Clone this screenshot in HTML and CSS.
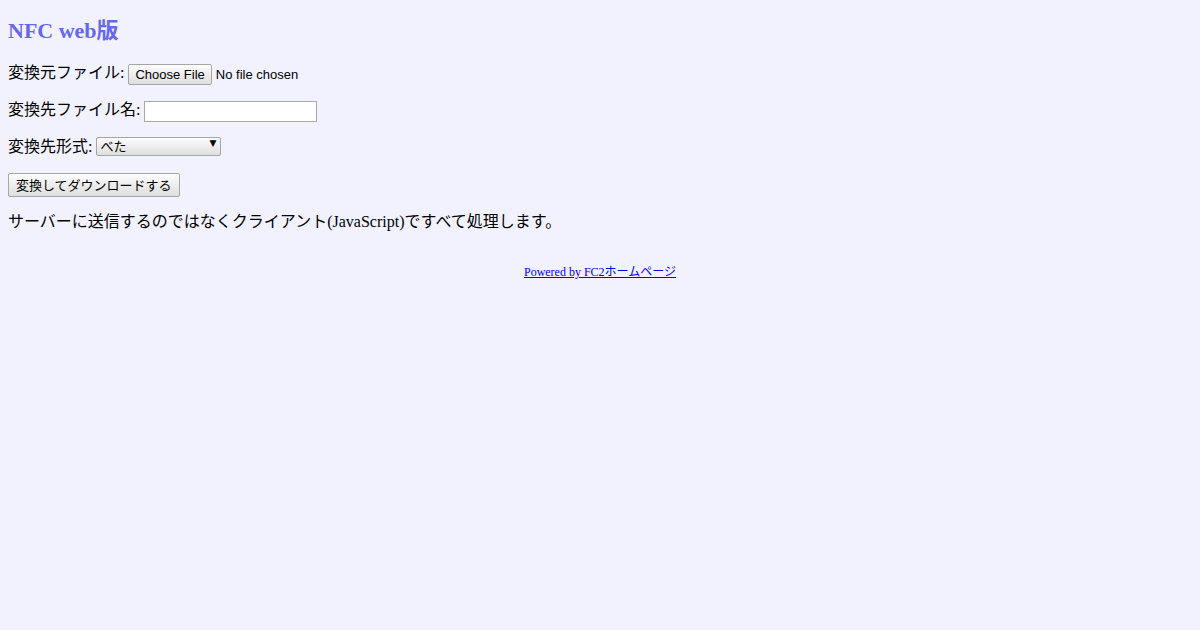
FILE: index.html
```html
<!DOCTYPE html>
<html lang="ja">
<head>
    <meta charset="UTF-8">
    <title>NFC web版</title>
    <link rel="stylesheet" href="styles.css">
</head>
<body>

    <h2 class="title">NFC web版</h2>

    <p>変換元ファイル: <input type="file" id="src" class="file-box"></p>

    <p>変換先ファイル名: <input type="text" id="dest" class="name-box"></p>

    <p>変換先形式: <span class="fmt-wrap"><select id="fmt" class="fmt-box">
        <option value="beta">べた</option>
    </select></span></p>

    <p><button id="go" class="go-btn">変換してダウンロードする</button></p>

    <p>サーバーに送信するのではなくクライアント(JavaScript)ですべて処理します。</p>

    <div class="footer">
        <a href="#">Powered by FC2ホームページ</a>
    </div>

</body>
</html>
```

FILE: styles.css
```css
body {
    font-family: "Liberation Serif", "Noto Sans CJK JP", serif;
    background-color: #f2f2ff;
    color: #000;
    margin: 8px;
}

.title {
    color: #6666ee;
    font-size: 22px;
    line-height: 26px;
    margin: 10px 0 18px;
}

p {
    line-height: 21px;
    margin: 14px 0;
}

input, select, button {
    font-family: "Liberation Sans", "Noto Sans CJK JP", sans-serif;
    font-size: 13px;
    vertical-align: middle;
}

.file-box {
    height: 21px;
}

.file-box::file-selector-button,
.go-btn {
    background: linear-gradient(#fdfdfd, #dedede);
    border: 1px solid #a6a6a6;
    border-radius: 2px;
    color: #000;
}

.file-box::file-selector-button {
    height: 21px;
    padding: 0 6px;
    margin-right: 4px;
}

.name-box {
    width: 165px;
    height: 17px;
    padding: 1px 3px;
    border: 1px solid #a9a9a9;
    background: #fff;
}

.fmt-wrap {
    position: relative;
    display: inline-block;
    vertical-align: middle;
}

.fmt-box {
    appearance: none;
    -webkit-appearance: none;
    width: 125px;
    height: 19px;
    padding: 0 16px 0 3px;
    border: 1px solid #a6a6a6;
    border-radius: 2px;
    background: linear-gradient(#fdfdfd, #dedede);
    color: #000;
    vertical-align: top;
}

.fmt-wrap::after {
    content: "▼";
    position: absolute;
    right: 5px;
    top: 0;
    font-family: "DejaVu Sans", sans-serif;
    font-size: 9px;
    line-height: 12px;
    color: #000;
    pointer-events: none;
}

.go-btn {
    height: 24px;
    padding: 0 7px;
}

.footer {
    text-align: center;
    font-size: 12px;
    margin-top: 30px;
}

.footer a {
    color: #0000ee;
}
```
